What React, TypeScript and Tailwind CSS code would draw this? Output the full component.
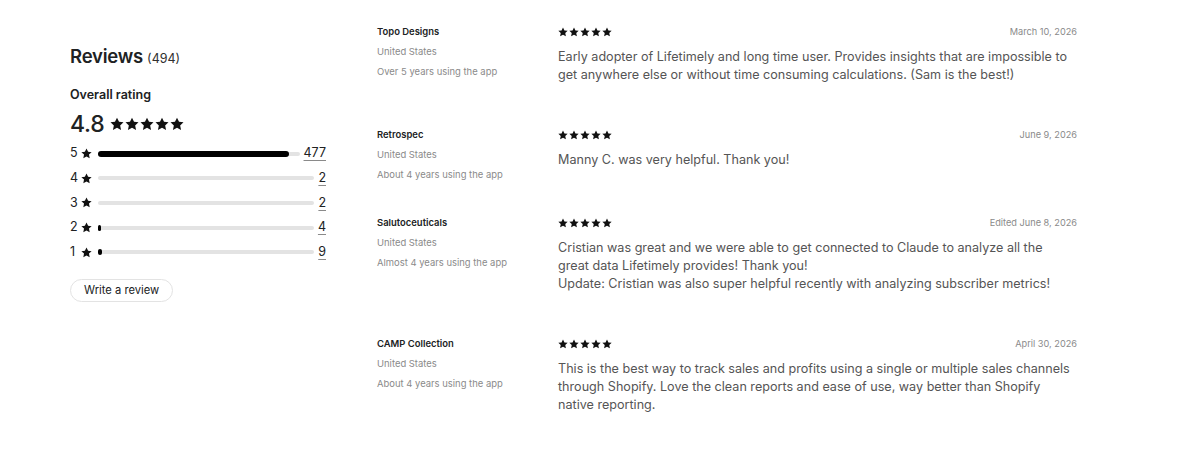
import React from "react";

const font = { fontFamily: "Inter, 'Noto Sans', sans-serif" };

function Star({ size }: { size: number }) {
  return (
    <svg width={size} height={size} viewBox="0 0 20 20" fill="currentColor" aria-hidden>
      <path d="M10 1l2.9 5.9 6.4.7-4.8 4.4 1.3 6.5L10 15.3l-5.8 3.2 1.3-6.5L.7 7.6l6.4-.7L10 1z" />
    </svg>
  );
}

function Stars({ size, gap }: { size: number; gap: string }) {
  return (
    <div className={`flex items-center ${gap} text-[#111]`}>
      {[0, 1, 2, 3, 4].map((i) => (
        <Star key={i} size={size} />
      ))}
    </div>
  );
}

const dist = [
  { n: 5, count: 477, pct: 95 },
  { n: 4, count: 2, pct: 0 },
  { n: 3, count: 2, pct: 0 },
  { n: 2, count: 4, pct: 0.6 },
  { n: 1, count: 9, pct: 1.7 },
];

const reviews = [
  {
    name: "Topo Designs",
    country: "United States",
    tenure: "Over 5 years using the app",
    date: "March 10, 2026",
    body: [
      "Early adopter of Lifetimely and long time user. Provides insights that are impossible to get anywhere else or without time consuming calculations. (Sam is the best!)",
    ],
  },
  {
    name: "Retrospec",
    country: "United States",
    tenure: "About 4 years using the app",
    date: "June 9, 2026",
    body: ["Manny C. was very helpful. Thank you!"],
  },
  {
    name: "Salutoceuticals",
    country: "United States",
    tenure: "Almost 4 years using the app",
    date: "Edited June 8, 2026",
    body: [
      "Cristian was great and we were able to get connected to Claude to analyze all the great data Lifetimely provides! Thank you!",
      "Update: Cristian was also super helpful recently with analyzing subscriber metrics!",
    ],
  },
  {
    name: "CAMP Collection",
    country: "United States",
    tenure: "About 4 years using the app",
    date: "April 30, 2026",
    body: [
      "This is the best way to track sales and profits using a single or multiple sales channels through Shopify. Love the clean reports and ease of use, way better than Shopify native reporting.",
    ],
  },
];

export default function App() {
  return (
    <div className="w-[1200px] h-[449px] bg-white flex text-[#202223]" style={font}>
      {/* Summary column */}
      <div className="ml-[70px] mt-[43px] w-[256px] flex flex-col">
        <h2 className="flex items-baseline gap-[4px]">
          <span className="text-[18.5px] font-semibold tracking-[-0.2px]">Reviews</span>
          <span className="text-[12.5px] text-[#303030]">(494)</span>
        </h2>
        <div className="mt-[15px] text-[12.5px] font-semibold">Overall rating</div>
        <div className="mt-[3px] flex items-center gap-[6px]">
          <span className="text-[23px] font-medium leading-[32px] tracking-[-0.3px]">4.8</span>
          <Stars size={14} gap="gap-[1px]" />
        </div>
        <div className="mt-[5px] flex flex-col gap-[6.4px]">
          {dist.map((d) => (
            <div key={d.n} className="flex items-center h-[18.25px]">
              <span className="text-[12.5px] w-[9px]">{d.n}</span>
              <span className="ml-[2px] text-[#111]">
                <Star size={11} />
              </span>
              <div className="ml-[6px] flex-1 h-[4px] rounded-full bg-[#e3e3e3] relative">
                {d.pct > 0 && (
                  <div
                    className="absolute left-0 top-[-1px] h-[6px] rounded-full bg-black"
                    style={{ width: `${d.pct}%`, minWidth: "3px" }}
                  />
                )}
              </div>
              <span className="ml-[4px] text-[12.5px] underline underline-offset-[3px] decoration-[#8a8a8a]">
                {d.count}
              </span>
            </div>
          ))}
        </div>
        <button className="mt-[18px] self-start h-[23px] px-[13px] rounded-full border border-[#e3e3e3] text-[11.2px] text-[#202223] bg-white">
          Write a review
        </button>
      </div>

      {/* Review list */}
      <div className="ml-[51px] mt-[24px] w-[700px] flex flex-col">
        {reviews.map((r) => (
          <div key={r.name} className="flex items-start">
            <div className="w-[181px] pb-[32px] flex flex-col text-[9.45px] leading-[16px]">
              <span className="font-semibold text-[#202223]">{r.name}</span>
              <span className="mt-[4px] text-[#8a8a8a]">{r.country}</span>
              <span className="mt-[4px] text-[#8a8a8a]">{r.tenure}</span>
            </div>
            <div className="w-[519px] pb-[43px] flex flex-col">
              <div className="flex items-center justify-between h-[16px]">
                <Stars size={10} gap="gap-[1px]" />
                <span className="text-[9.2px] text-[#8a8a8a]">{r.date}</span>
              </div>
              <div className="mt-[8px] w-[512px] text-[12.6px] leading-[18px] text-[#555555]">
                {r.body.map((p, i) => (
                  <p key={i}>{p}</p>
                ))}
              </div>
            </div>
          </div>
        ))}
      </div>
    </div>
  );
}
